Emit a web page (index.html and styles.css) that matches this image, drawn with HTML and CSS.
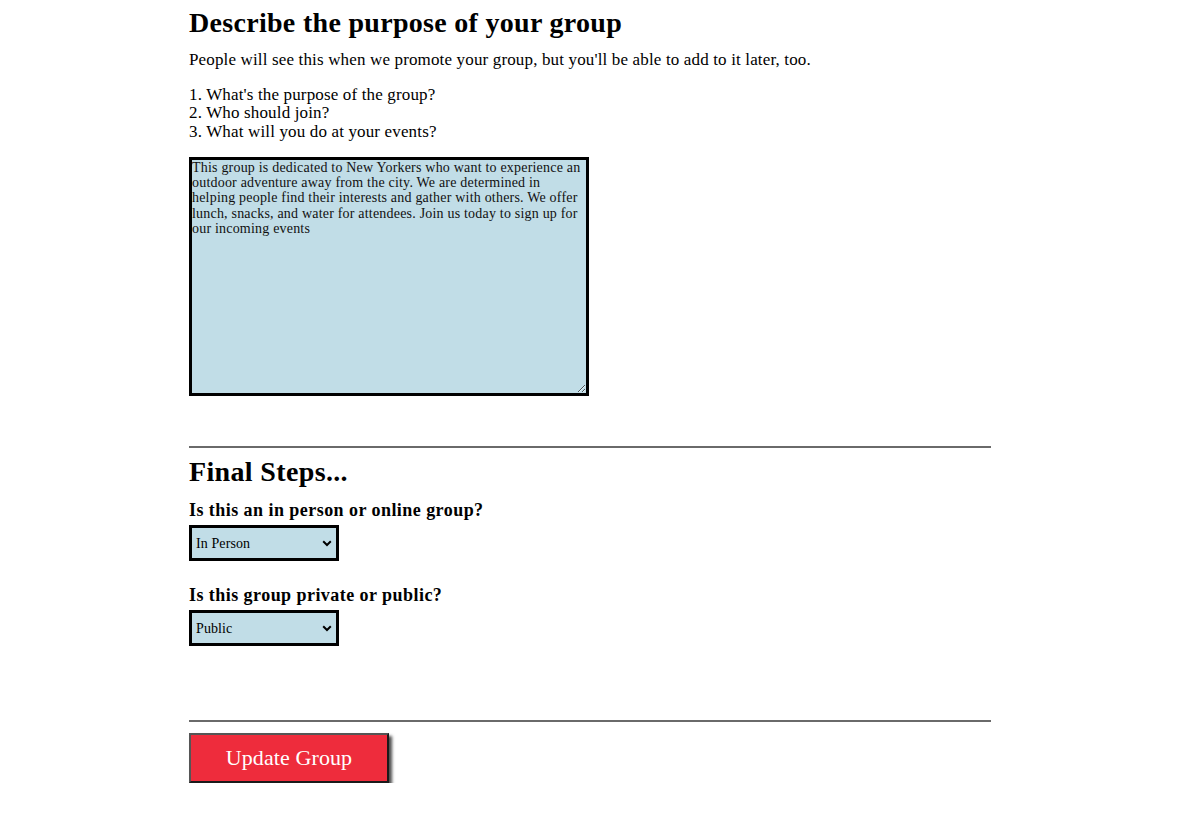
FILE: index.html
```html
<!DOCTYPE html>
<html lang="en">
<head>
<meta charset="utf-8">
<title>Update Group</title>
<link rel="stylesheet" href="styles.css">
</head>
<body>
<main class="page">
  <section class="purpose">
    <h1 class="title">Describe the purpose of your group</h1>
    <p class="lead">People will see this when we promote your group, but you'll be able to add to it later, too.</p>
    <p class="questions">1. What's the purpose of the group?<br>2. Who should join?<br>3. What will you do at your events?</p>
    <textarea class="desc">This group is dedicated to New Yorkers who want to experience an outdoor adventure away from the city. We are determined in helping people find their interests and gather with others. We offer lunch, snacks, and water for attendees. Join us today to sign up for our incoming events</textarea>
  </section>
  <hr class="rule rule-top">
  <section class="final">
    <h2 class="title title-final">Final Steps...</h2>
    <div class="field field-first">
      <label class="label" for="kind">Is this an in person or online group?</label>
      <div class="select-wrap">
        <select class="select" id="kind">
          <option>In Person</option>
          <option>Online</option>
        </select>
        <svg class="chev" width="10" height="7" viewBox="0 0 10 7"><path d="M1.2 1.3 L5 5 L8.8 1.3" fill="none" stroke="#000" stroke-width="2"/></svg>
      </div>
    </div>
    <div class="field field-second">
      <label class="label" for="privacy">Is this group private or public?</label>
      <div class="select-wrap">
        <select class="select" id="privacy">
          <option>Public</option>
          <option>Private</option>
        </select>
        <svg class="chev" width="10" height="7" viewBox="0 0 10 7"><path d="M1.2 1.3 L5 5 L8.8 1.3" fill="none" stroke="#000" stroke-width="2"/></svg>
      </div>
    </div>
  </section>
  <hr class="rule rule-bottom">
  <div class="actions">
    <button class="submit" type="button">Update Group</button>
  </div>
</main>
</body>
</html>
```
FILE: styles.css
```css
html, body {
  margin: 0;
  padding: 0;
  background: #ffffff;
}

body {
  padding-right: 1px;
  font-family: "Liberation Serif", "Times New Roman", serif;
  color: #000;
}

.page {
  width: 802px;
  margin: 0 auto;
  display: flex;
  flex-direction: column;
  align-items: flex-start;
}

.purpose,
.final {
  display: flex;
  flex-direction: column;
  align-items: flex-start;
  width: 100%;
}

.title {
  margin: 8px 0 0;
  font-size: 28px;
  line-height: 30px;
  font-weight: bold;
  letter-spacing: 0.3px;
}

.title-final {
  margin-top: 9px;
  letter-spacing: 0.35px;
}

.lead {
  margin: 13px 0 0;
  font-size: 17px;
  line-height: 18.5px;
  letter-spacing: 0.15px;
}

.questions {
  margin: 16px 0 0;
  font-size: 17px;
  line-height: 18.5px;
  letter-spacing: 0.15px;
}

.desc {
  display: block;
  margin: 16px 0 0;
  width: 400px;
  height: 239px;
  box-sizing: border-box;
  border: 3px solid #000;
  padding: 0;
  background: #c1dde7;
  font-family: "Liberation Serif", "Times New Roman", serif;
  font-size: 14px;
  line-height: 15.2px;
  letter-spacing: 0.2px;
  color: #111;
  outline: none;
}

.rule {
  width: 100%;
  margin: 0;
  border: none;
  border-top: 2px solid #6a6a6a;
  height: 0;
}

.rule-top {
  margin-top: 50px;
}

.rule-bottom {
  margin-top: 74px;
}

.field {
  display: flex;
  flex-direction: column;
  align-items: flex-start;
}

.field-first {
  margin-top: 14px;
}

.field-second {
  margin-top: 25px;
}

.label {
  font-size: 18px;
  line-height: 18px;
  font-weight: bold;
  letter-spacing: 0.45px;
}

.select-wrap {
  position: relative;
  margin-top: 6px;
  width: 150px;
  height: 36px;
}

.select {
  appearance: none;
  -webkit-appearance: none;
  width: 150px;
  height: 36px;
  box-sizing: border-box;
  border: 3px solid #000;
  border-radius: 0;
  padding: 0 0 0 4px;
  margin: 0;
  background: #c1dde7;
  font-family: "Liberation Serif", "Times New Roman", serif;
  font-size: 14px;
  letter-spacing: 0.1px;
  color: #000;
  outline: none;
}

.chev {
  position: absolute;
  left: 133px;
  top: 15px;
  pointer-events: none;
}

.actions {
  margin-top: 11px;
  display: flex;
}

.submit {
  width: 200px;
  height: 50px;
  box-sizing: border-box;
  margin: 0;
  padding: 0;
  background: #ee2c3c;
  color: #fff;
  border-style: solid;
  border-width: 2px;
  border-color: #555 #1a1a1a #1a1a1a #555;
  box-shadow: 3px 3px 3px rgba(0, 0, 0, 0.7);
  font-family: "Liberation Serif", "Times New Roman", serif;
  font-size: 22px;
  letter-spacing: 0.1px;
  cursor: pointer;
}
```
